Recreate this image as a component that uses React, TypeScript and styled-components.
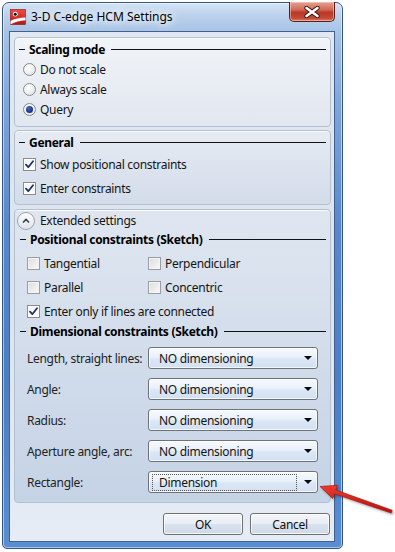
import React from "react";
import styled, { createGlobalStyle } from "styled-components";

const GlobalStyle = createGlobalStyle`
  html, body { margin: 0; padding: 0; background: #ffffff; }
  body {
    font-family: "Noto Sans", "Open Sans", sans-serif;
    font-size: 12px;
    letter-spacing: -0.3px;
    color: #151515;
  }
`;

const Page = styled.div`
  position: relative;
  width: 395px;
  height: 552px;
  padding: 2px 0 0 2px;
  box-sizing: border-box;
  overflow: hidden;
`;

const Window = styled.div`
  width: 341px;
  height: 547px;
  box-sizing: border-box;
  border: 1px solid #36557e;
  border-radius: 7px 7px 5px 5px;
  background: linear-gradient(
    180deg,
    #d4e3f4 0px,
    #b9d0eb 14px,
    #a6c2e5 30px,
    #7fa6da 100px,
    #5888cc 220px,
    #4a7ec5 380px,
    #5a8ed3 547px
  );
  box-shadow: inset 0 0 0 1px rgba(255, 255, 255, 0.5);
  display: flex;
  flex-direction: column;
`;

const TitleBar = styled.div`
  display: flex;
  align-items: flex-start;
  height: 28px;
  padding-left: 7px;
  flex-shrink: 0;
`;

const TitleIcon = styled.svg`
  width: 16px;
  height: 16px;
  margin-top: 6px;
  flex-shrink: 0;
`;

const TitleText = styled.div`
  margin-top: 6px;
  margin-left: 5px;
  line-height: 16px;
  font-size: 12px;
  letter-spacing: 0;
  color: #000;
  text-shadow: 0 0 6px #ffffff, 0 0 10px #ffffff, 0 0 14px rgba(255, 255, 255, 0.9);
`;

const CloseButton = styled.div`
  margin-left: auto;
  margin-right: 7px;
  margin-top: -1px;
  width: 46px;
  height: 20px;
  box-sizing: border-box;
  border: 1px solid #5a1e17;
  border-top: none;
  border-radius: 0 0 5px 5px;
  background: linear-gradient(180deg, #e6a292 0%, #d26a58 40%, #bb3726 55%, #c24a36 85%, #d9806a 100%);
  box-shadow: inset 0 0 0 1px rgba(255, 210, 200, 0.55);
  display: flex;
  align-items: center;
  justify-content: center;
`;

const Client = styled.div`
  flex: 1;
  margin: 0 7px 6px 6px;
  border: 1px solid #43618d;
  background: linear-gradient(180deg, #e2e8f1 0%, #dbe3ee 50%, #e6ecf5 100%);
  padding: 5px 3px 6px 4px;
  display: flex;
  flex-direction: column;
`;

const Panel = styled.div<{ $top: string; $bottom: string; $gap: number; $pb: number; $pt: number }>`
  margin-top: ${(p) => p.$gap}px;
  border: 1px solid #b3c0d2;
  border-radius: 4px;
  background: linear-gradient(180deg, ${(p) => p.$top} 0%, ${(p) => p.$bottom} 100%);
  box-shadow: inset 0 1px 0 rgba(255, 255, 255, 0.8);
  padding: ${(p) => p.$pt}px 0 ${(p) => p.$pb}px 0;
  display: flex;
  flex-direction: column;
`;

const Header = styled.div<{ $indent?: number }>`
  display: flex;
  align-items: center;
  height: 16px;
  padding: 0 4px 0 ${(p) => p.$indent ?? 4}px;
  font-weight: 700;
  color: #000;
  white-space: nowrap;
  &::before {
    content: "";
    width: 6px;
    height: 1px;
    background: #111;
    margin-right: 4px;
  }
  &::after {
    content: "";
    flex: 1;
    height: 1px;
    background: #111;
    margin-left: 6px;
  }
`;

const Options = styled.div<{ $mt: number }>`
  margin-top: ${(p) => p.$mt}px;
  display: flex;
  flex-direction: column;
`;

const Option = styled.div<{ $h: number; $indent: number }>`
  display: flex;
  align-items: center;
  height: ${(p) => p.$h}px;
  padding-left: ${(p) => p.$indent}px;
  gap: 4px;
  white-space: nowrap;
`;

const TwoCols = styled.div`
  margin-top: 4px;
  display: grid;
  grid-template-columns: 121px 1fr;
  padding-left: 12px;
`;

const RadioCircle = styled.span<{ $on?: boolean }>`
  width: 13px;
  height: 13px;
  box-sizing: border-box;
  border-radius: 50%;
  border: 1px solid #8a8c8f;
  background: radial-gradient(circle at 40% 35%, #ffffff 0%, #f1f1f1 45%, #d6d8db 100%);
  display: flex;
  align-items: center;
  justify-content: center;
  flex-shrink: 0;
  &::after {
    content: "";
    display: ${(p) => (p.$on ? "block" : "none")};
    width: 7px;
    height: 7px;
    border-radius: 50%;
    background: radial-gradient(circle at 40% 35%, #4a6fc0 0%, #1d3e8c 50%, #0f2766 100%);
  }
`;

const CheckBox = styled.span<{ $dim?: boolean }>`
  width: 13px;
  height: 13px;
  box-sizing: border-box;
  border: 1px solid ${(p) => (p.$dim ? "#9a9c9f" : "#8a8c8f")};
  background: ${(p) =>
    p.$dim
      ? "linear-gradient(135deg, #dcdcdc 0%, #eeeeee 60%, #fafafa 100%)"
      : "linear-gradient(135deg, #f2f2f2 0%, #ffffff 100%)"};
  box-shadow: inset 0 0 0 1px ${(p) => (p.$dim ? "#f4f4f4" : "#ffffff")};
  display: flex;
  align-items: center;
  justify-content: center;
  flex-shrink: 0;
`;

const ExtendedRow = styled.div`
  display: flex;
  align-items: center;
  height: 21px;
  padding-left: 2px;
  gap: 5px;
`;

const ExpandCircle = styled.span`
  width: 18px;
  height: 18px;
  box-sizing: border-box;
  border-radius: 50%;
  border: 1px solid #9aa3b0;
  background: linear-gradient(180deg, #fbfcfd 0%, #eef1f5 50%, #dfe4ea 100%);
  display: flex;
  align-items: center;
  justify-content: center;
`;

const ComboList = styled.div`
  margin-top: 8px;
  display: flex;
  flex-direction: column;
  gap: 9px;
`;

const ComboRow = styled.div`
  display: grid;
  grid-template-columns: 121px 170px;
  align-items: center;
  padding-left: 12px;
  height: 22px;
`;

const Label = styled.span`
  color: #222;
  white-space: nowrap;
`;

const Combo = styled.div`
  height: 22px;
  box-sizing: border-box;
  border: 1px solid #6f7277;
  border-radius: 3px;
  background: linear-gradient(180deg, #f7fafd 0%, #eaf1fa 45%, #dbe7f6 55%, #d1e0f3 100%);
  box-shadow: inset 0 0 0 1px rgba(255, 255, 255, 0.7);
  display: flex;
  align-items: center;
  padding: 0 5px 0 3px;
`;

const ComboText = styled.span<{ $focus?: boolean }>`
  flex: 1;
  height: 17px;
  line-height: 15px;
  padding-left: 6px;
  margin-right: 7px;
  box-sizing: border-box;
  border: 1px dotted ${(p) => (p.$focus ? "#555" : "transparent")};
  color: #151515;
  white-space: nowrap;
`;

const Arrow = styled.span`
  width: 0;
  height: 0;
  border-left: 4px solid transparent;
  border-right: 4px solid transparent;
  border-top: 4px solid #0c0c0c;
`;

const Footer = styled.div`
  margin-top: 10px;
  display: flex;
  justify-content: flex-end;
  gap: 7px;
  padding-right: 1px;
`;

const Button = styled.div`
  width: 80px;
  height: 22px;
  box-sizing: border-box;
  border: 1px solid #707070;
  border-radius: 3px;
  background: linear-gradient(180deg, #f3f6fa 0%, #e9eef5 48%, #d9e2ed 52%, #cfdae8 100%);
  box-shadow: inset 0 0 0 1px rgba(255, 255, 255, 0.75);
  display: flex;
  align-items: center;
  justify-content: center;
  color: #111;
`;

const Annotation = styled.svg`
  position: absolute;
  left: 0;
  top: 0;
  pointer-events: none;
`;

const Tick = () => (
  <svg width="9" height="9" viewBox="0 0 9 9">
    <path d="M1 4.6 L3.3 7.2 L8 1.2" fill="none" stroke="#1f3464" strokeWidth="1.8" strokeLinecap="round" strokeLinejoin="round" />
  </svg>
);

const Radio = ({ on, text }: { on?: boolean; text: string }) => (
  <Option $h={20} $indent={8}>
    <RadioCircle $on={on} />
    <span>{text}</span>
  </Option>
);

const Check = ({ on, dim, text, h, indent }: { on?: boolean; dim?: boolean; text: string; h: number; indent: number }) => (
  <Option $h={h} $indent={indent}>
    <CheckBox $dim={dim}>{on && <Tick />}</CheckBox>
    <span>{text}</span>
  </Option>
);

const dimRows = [
  { label: "Length, straight lines:", value: "NO dimensioning" },
  { label: "Angle:", value: "NO dimensioning" },
  { label: "Radius:", value: "NO dimensioning" },
  { label: "Aperture angle, arc:", value: "NO dimensioning" },
  { label: "Rectangle:", value: "Dimension", focus: true },
];

export default function App() {
  return (
    <Page>
      <GlobalStyle />
      <Window>
        <TitleBar>
          <TitleIcon viewBox="0 0 16 16">
            <defs>
              <linearGradient id="ic" x1="0" y1="0" x2="0" y2="1">
                <stop offset="0" stopColor="#ef4a45" />
                <stop offset="1" stopColor="#b51616" />
              </linearGradient>
            </defs>
            <rect x="0.5" y="0.5" width="15" height="15" fill="url(#ic)" stroke="#8a1010" strokeWidth="0.6" />
            <path d="M0.5 12 C5 9.5 10 9 15.5 8.6 L15.5 11.2 C10 11.4 5 12.8 0.5 15.5 Z" fill="#ffffff" />
            <circle cx="5.3" cy="5.2" r="2.4" fill="#ffffff" />
            <circle cx="5.3" cy="5.2" r="1.5" fill="#111111" />
          </TitleIcon>
          <TitleText>3-D C-edge HCM Settings</TitleText>
          <CloseButton>
            <svg width="16" height="12" viewBox="0 0 16 12">
              <path d="M2.5 2 L13.5 10 M13.5 2 L2.5 10" stroke="#3b1410" strokeWidth="4.4" strokeLinecap="round" />
              <path d="M2.5 2 L13.5 10 M13.5 2 L2.5 10" stroke="#ffffff" strokeWidth="2.6" strokeLinecap="round" />
            </svg>
          </CloseButton>
        </TitleBar>

        <Client>
          <Panel $top="#f1f4f8" $bottom="#e1e7f0" $gap={0} $pt={3} $pb={7}>
            <Header>Scaling mode</Header>
            <Options $mt={2}>
              <Radio text="Do not scale" />
              <Radio text="Always scale" />
              <Radio on text="Query" />
            </Options>
          </Panel>

          <Panel $top="#e6ebf3" $bottom="#d3dcea" $gap={3} $pt={3} $pb={4}>
            <Header>General</Header>
            <Options $mt={2}>
              <Check on text="Show positional constraints" h={24} indent={8} />
              <Check on text="Enter constraints" h={24} indent={8} />
            </Options>
          </Panel>

          <Panel $top="#dfe6f0" $bottom="#c5d3e6" $gap={4} $pt={0} $pb={9}>
            <ExtendedRow>
              <ExpandCircle>
                <svg width="8" height="6" viewBox="0 0 8 6">
                  <path d="M1 4.5 L4 1.5 L7 4.5" fill="none" stroke="#3a3f47" strokeWidth="1.6" />
                </svg>
              </ExpandCircle>
              <span>Extended settings</span>
            </ExtendedRow>
            <Header $indent={5}>Positional constraints (Sketch)</Header>
            <TwoCols>
              <Check dim text="Tangential" h={24} indent={0} />
              <Check dim text="Perpendicular" h={24} indent={0} />
              <Check dim text="Parallel" h={24} indent={0} />
              <Check dim text="Concentric" h={24} indent={0} />
            </TwoCols>
            <Check on text="Enter only if lines are connected" h={24} indent={12} />
            <Header $indent={5}>Dimensional constraints (Sketch)</Header>
            <ComboList>
              {dimRows.map((r) => (
                <ComboRow key={r.label}>
                  <Label>{r.label}</Label>
                  <Combo>
                    <ComboText $focus={r.focus}>{r.value}</ComboText>
                    <Arrow />
                  </Combo>
                </ComboRow>
              ))}
            </ComboList>
          </Panel>

          <Footer>
            <Button>OK</Button>
            <Button>Cancel</Button>
          </Footer>
        </Client>
      </Window>

      <Annotation width="395" height="552" viewBox="0 0 395 552">
        <defs>
          <filter id="sh" x="-20%" y="-20%" width="140%" height="140%">
            <feDropShadow dx="1.5" dy="1.5" stdDeviation="1" floodColor="#000" floodOpacity="0.35" />
          </filter>
          <linearGradient id="ar" x1="0" y1="0" x2="0" y2="1">
            <stop offset="0" stopColor="#ee3b30" />
            <stop offset="1" stopColor="#b8110e" />
          </linearGradient>
        </defs>
        <polygon
          points="320,486.5 332.7,498.5 334.4,493.8 391.2,513.1 392.2,510.3 335.8,490 337.5,485.3"
          fill="url(#ar)"
          stroke="#9c0d0a"
          strokeWidth="0.6"
          filter="url(#sh)"
        />
      </Annotation>
    </Page>
  );
}
